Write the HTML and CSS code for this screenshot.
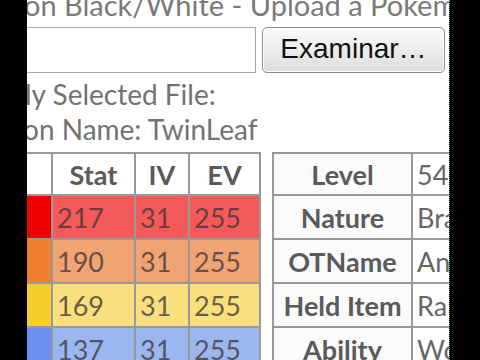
FILE: index.html
```html
<!DOCTYPE html>
<html lang="en">
<head>
  <meta charset="UTF-8">
  <meta name="viewport" content="width=device-width, initial-scale=1.0">
  <title>Pokemon Black/White - Upload a Pokemon</title>
  <link rel="stylesheet" href="styles.css">
</head>
<body>
  <div class="frame">
    <div class="bar"></div>
    <main class="page">
      <div class="title"><span>on Black/White - Upload a Pokemon</span></div>

      <div class="file-row">
        <div class="file-input"></div>
        <button class="browse">Examinar…</button>
      </div>

      <p class="info first">ly Selected File:</p>
      <p class="info cut">on Name: TwinLeaf</p>

      <div class="tables">
        <table class="stats">
          <tr class="head">
            <th class="swatch"></th>
            <th class="c-stat">Stat</th>
            <th class="c-iv">IV</th>
            <th class="c-ev">EV</th>
          </tr>
          <tr class="hp">
            <td class="swatch"></td><td>217</td><td>31</td><td>255</td>
          </tr>
          <tr class="atk">
            <td class="swatch"></td><td>190</td><td>31</td><td>255</td>
          </tr>
          <tr class="def">
            <td class="swatch"></td><td>169</td><td>31</td><td>255</td>
          </tr>
          <tr class="spa">
            <td class="swatch"></td><td>137</td><td>31</td><td>255</td>
          </tr>
        </table>

        <table class="details">
          <tr class="head"><th class="c-key">Level</th><td class="c-val">54</td></tr>
          <tr><th>Nature</th><td>Brave</td></tr>
          <tr><th>OTName</th><td>Andy</td></tr>
          <tr><th>Held Item</th><td>Rare Candy</td></tr>
          <tr><th>Ability</th><td>Wonder Guard</td></tr>
        </table>
      </div>
    </main>
    <div class="bar bar-right"></div>
  </div>
</body>
</html>
```

FILE: styles.css
```css
body {
  margin: 0;
  background: #000;
  font-family: Lato, "Open Sans", sans-serif;
}
.frame {
  display: flex;
  height: 360px;
  overflow: hidden;
}
.bar {
  width: 27px;
  flex-shrink: 0;
  background: #000;
}
.bar-right {
  width: 30px;
  border-left: 1px dotted #4c9a5a;
}
.page {
  width: 422px;
  flex-shrink: 0;
  background: #fff;
  overflow: hidden;
  white-space: nowrap;
}
.title {
  height: 27px;
  overflow: hidden;
  font-size: 29px;
  line-height: 28px;
  color: #7a7a7a;
}
.title span {
  display: block;
  margin-top: -9px;
  text-indent: -3px;
}
.file-row {
  display: flex;
  height: 46px;
  gap: 6px;
}
.file-input {
  width: 228px;
  height: 44px;
  background: #fff;
  border: 1px solid #a8a8a8;
  border-left: none;
}
.browse {
  width: 183px;
  height: 46px;
  padding: 0 0 2px;
  border: 1px solid #8c8c8c;
  border-radius: 5px;
  background: linear-gradient(#fafafa, #ececec 50%, #dcdcdc);
  box-shadow: inset 0 0 0 1px #fff;
  font-family: "Liberation Sans", Arial, sans-serif;
  font-size: 28px;
  color: #111;
}
.info {
  margin: 0;
  font-size: 28px;
  line-height: 35px;
  color: #727272;
  text-indent: -2px;
}
.info.first {
  margin-top: 4px;
}
.info.cut {
  text-indent: -4px;
}
.tables {
  display: flex;
  gap: 11px;
  margin-top: 5px;
}
table {
  flex-shrink: 0;
  border-collapse: collapse;
  table-layout: fixed;
  font-size: 27px;
  color: #666;
}
th, td {
  box-sizing: border-box;
  border: 2px solid #999;
  padding: 0 4px;
  text-align: left;
  overflow: hidden;
}
th {
  text-align: center;
  font-weight: 700;
  color: #5a5a5a;
}
tr.head {
  height: 42px;
}
tr {
  height: 44px;
}
.stats {
  width: 233px;
}
.stats .swatch {
  width: 25px;
  padding: 0;
  border-left: none;
}
.c-stat { width: 83px; }
.c-iv { width: 54px; }
.c-ev { width: 71px; }
.stats td { color: rgba(60, 50, 50, 0.75); }
.hp td { background: #f45a5a; }
.hp .swatch { background: #ee0000; }
.atk td { background: #f0a474; }
.atk .swatch { background: #ef7f30; }
.def td { background: #f8e07e; }
.def .swatch { background: #f6cd2c; }
.spa td { background: #9cb6f2; }
.spa .swatch { background: #6a8ff0; }
.details {
  width: 260px;
}
.details th {
  background: #fbfbfb;
}
.c-key { width: 139px; }
.c-val { width: 121px; }
```
